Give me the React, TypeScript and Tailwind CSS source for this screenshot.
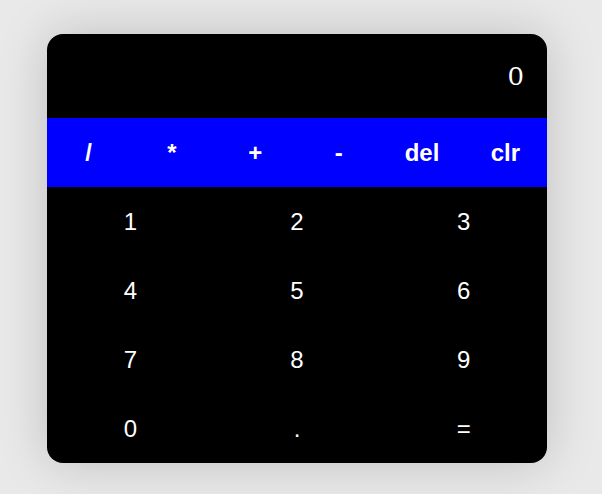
import React, { useState } from "react";

const ops = ["/", "*", "+", "-", "del", "clr"];
const digits = ["1", "2", "3", "4", "5", "6", "7", "8", "9", "0", ".", "="];

export default function App() {
  const [display] = useState("0");

  return (
    <div className="min-h-[494px] w-full bg-[#e9e9e9] pt-[34px] pl-[47px] font-['Liberation_Sans',Arial,sans-serif]">
      <div className="w-[500px] overflow-hidden rounded-[16px] bg-black shadow-[0_0_50px_rgba(0,0,0,0.18)]">
        <div className="flex h-[84px] items-center justify-end pr-[24px] text-[28px] text-white">
          <span className="font-serif">{display}</span>
        </div>
        <div className="grid h-[69px] grid-cols-6 bg-[#0000ff]">
          {ops.map((op) => (
            <button
              key={op}
              className="flex items-center justify-center text-[24px] font-bold text-white"
            >
              {op}
            </button>
          ))}
        </div>
        <div className="grid grid-cols-3">
          {digits.map((d) => (
            <button
              key={d}
              className="flex h-[69px] items-center justify-center text-[24px] text-white"
            >
              {d}
            </button>
          ))}
        </div>
      </div>
    </div>
  );
}
